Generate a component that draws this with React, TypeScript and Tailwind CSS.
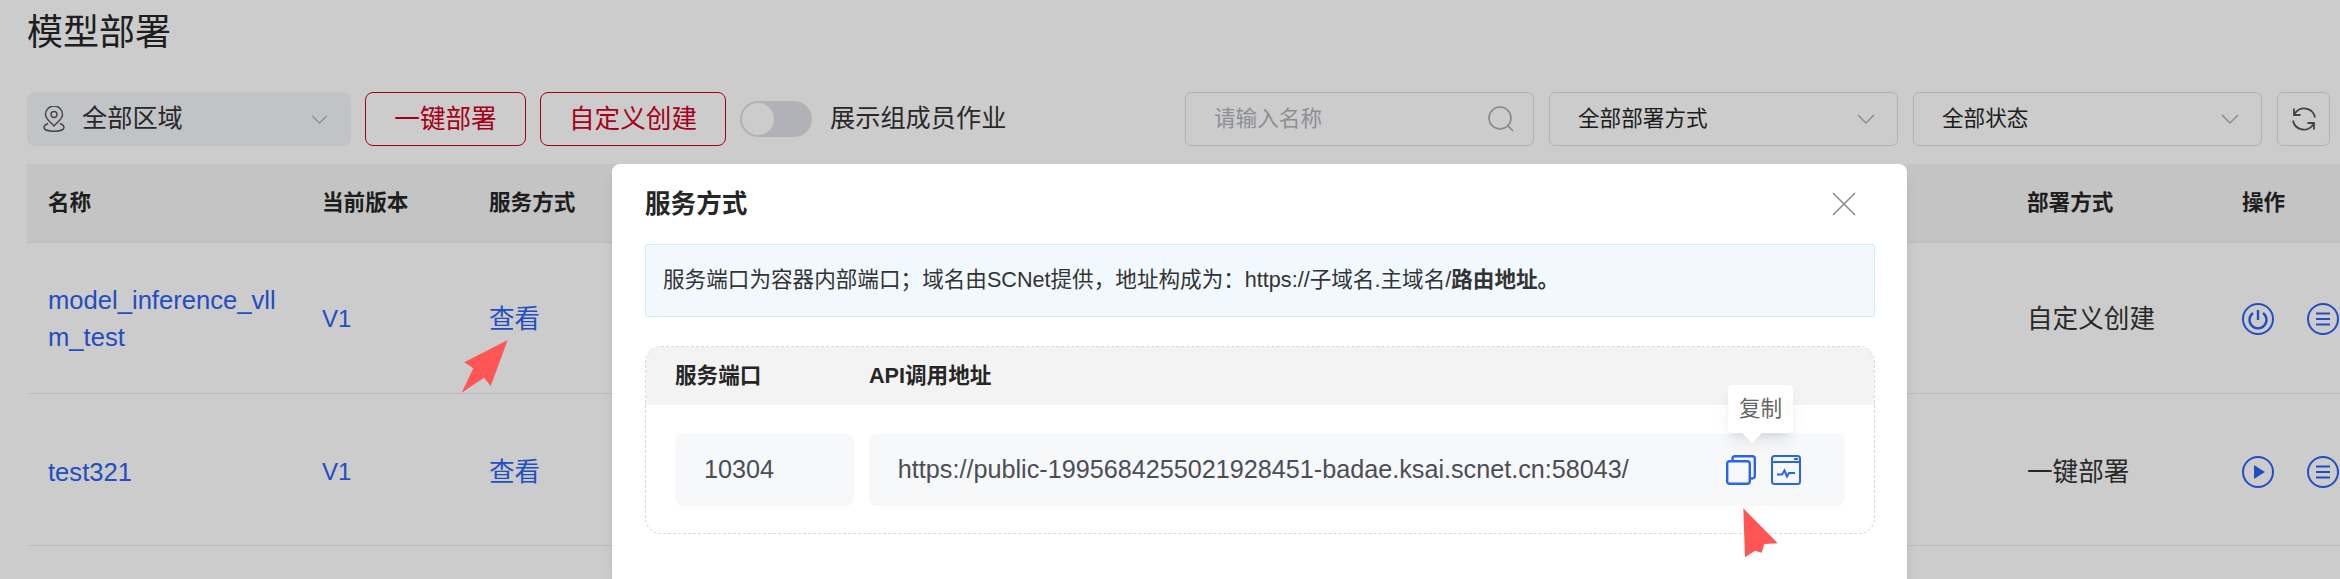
import React from "react";

const Chevron = ({ className }: { className: string }) => (
  <svg className={className} viewBox="0 0 18 10" fill="none" stroke="currentColor" strokeWidth="1.4">
    <path d="M1 1l8 8 8-8" />
  </svg>
);

const CircleIcon = ({ children }: { children: React.ReactNode }) => (
  <svg className="w-8 h-8 text-[#2c62f2]" viewBox="0 0 32 32" fill="none" stroke="currentColor" strokeWidth="2">
    <circle cx="16" cy="16" r="15" />
    {children}
  </svg>
);

const Menu = () => (
  <CircleIcon>
    <path d="M9 10.500h14M9 16h14M9 21.500h14" strokeWidth="2.200" />
  </CircleIcon>
);

const Power = () => (
  <CircleIcon>
    <path d="M11 10a8.500 8.500 0 1 0 10 0M16 7v10" strokeWidth="2.400" />
  </CircleIcon>
);

const Play = () => (
  <CircleIcon>
    <path d="M12 9l11 7-11 7z" fill="currentColor" stroke="none" />
  </CircleIcon>
);

const Row = ({ name, action, mode, offset }: { name: string; action: React.ReactNode; mode: string; offset: string }) => (
  <div className={`grid grid-cols-[274px_167px_1538px_215px_119px] items-center border-b border-[#ebebeb] ${offset}`}>
    <div className="pl-[21px] w-[256px] break-all leading-[37px] text-[#2c62f2]">{name}</div>
    <div className="pl-[21px] text-[24px] text-[#2c62f2]">V1</div>
    <div className="pl-[21px] text-[#2c62f2]">查看</div>
    <div className="pl-[21px] text-[#333]">{mode}</div>
    <div className="pl-[21px] flex gap-[33px]">
      {action}
      <Menu />
    </div>
  </div>
);

const SelectBox = ({ label }: { label: string }) => (
  <div className="w-[349px] h-[54px] flex items-center justify-between rounded-md border border-[#dcdfe6] pl-[28px] pr-[22px] text-[21.600px] text-[#262626]">
    <span>{label}</span>
    <Chevron className="w-[18px] h-[10px] text-[#a8abb2]" />
  </div>
);

export default function App() {
  return (
    <div className="relative w-[2340px] h-[579px] overflow-hidden bg-white font-['Liberation_Sans','Noto_Sans_CJK_SC',sans-serif] text-[#262626]">
      <div className="pl-[27px] pt-[13px]">
        <h1 className="text-[36px] leading-[40px] h-[79px] font-normal">模型部署</h1>
        <div className="flex items-center h-[54px] pr-[10px]">
          <div className="w-[324px] h-[54px] flex items-center justify-between rounded-lg bg-[#f2f4f9] pl-[16px] pr-[23px] text-[25.200px] text-[#333]">
            <span className="flex items-center gap-[17px]">
              <svg className="w-[22px] h-[26px] text-[#555]" viewBox="0 0 22 26" fill="none" stroke="currentColor" strokeWidth="1.400">
                <path d="M11 20C7.500 16 2.500 13 2.500 8.500a8.500 8.500 0 0 1 17 0C19.500 13 14.500 16 11 20z" />
                <circle cx="11" cy="8.500" r="3" />
                <path d="M5 17.500C2.500 18.500 1 19.800 1 21.500 1 23.800 5.500 25.300 11 25.300S21 23.800 21 21.500c0-1.700-1.500-3-4-4" />
              </svg>
              全部区域
            </span>
            <Chevron className="w-[17px] h-[9px] text-[#a8abb2]" />
          </div>
          <button className="ml-[14px] w-[161px] h-[54px] rounded-lg border border-[#ce001f] text-[25.600px] text-[#ce001f]">一键部署</button>
          <button className="ml-[14px] w-[186px] h-[54px] rounded-lg border border-[#ce001f] text-[25.600px] text-[#ce001f]">自定义创建</button>
          <div className="ml-[14px] w-[72px] h-[36px] rounded-full bg-[#dcdfe6] p-[2px]">
            <div className="w-[32px] h-[32px] rounded-full bg-white" />
          </div>
          <span className="ml-[18px] text-[25.200px] text-[#333]">展示组成员作业</span>
          <div className="ml-auto flex gap-[15px]">
            <div className="w-[349px] h-[54px] flex items-center justify-between rounded-md border border-[#dcdfe6] pl-[28px] pr-[18px] text-[21.600px] text-[#b0b3ba]">
              <span>请输入名称</span>
              <svg className="w-[28px] h-[28px] text-[#a8abb2]" viewBox="0 0 28 28" fill="none" stroke="currentColor" strokeWidth="1.600">
                <circle cx="13" cy="13" r="11" />
                <path d="M21 21l5 5" />
              </svg>
            </div>
            <SelectBox label="全部部署方式" />
            <SelectBox label="全部状态" />
            <div className="w-[53px] h-[54px] flex items-center justify-center rounded-md border border-[#dcdfe6]">
              <svg className="w-[26px] h-[26px] text-[#555]" viewBox="0 0 26 26" fill="none" stroke="currentColor" strokeWidth="1.800">
                <path d="M24 11.500A11 11 0 0 0 5 6L3 9M3 2.500V9h6.500M2 14.500A11 11 0 0 0 21 20L23 17M23 23.500V17h-6.500" />
              </svg>
            </div>
          </div>
        </div>
        <div className="mt-[18px] text-[25.600px]">
          <div className="grid grid-cols-[274px_167px_1538px_215px_119px] items-center h-[79px] bg-[#f5f5f5] border-b border-[#ebebeb] text-[21.600px] font-bold text-[#262626]">
            <div className="pl-[21px]">名称</div>
            <div className="pl-[21px]">当前版本</div>
            <div className="pl-[21px]">服务方式</div>
            <div className="pl-[21px]">部署方式</div>
            <div className="pl-[21px]">操作</div>
          </div>
          <div className="h-[151px] grid">
            <Row name="model_inference_vllm_test" action={<Power />} mode="自定义创建" offset="pt-[2px]" />
          </div>
          <div className="h-[152px] grid">
            <Row name="test321" action={<Play />} mode="一键部署" offset="pt-[5px]" />
          </div>
        </div>
      </div>

      <div className="absolute inset-0 bg-black/20" />

      <div className="absolute left-[612px] top-[164px] w-[1295px] h-[415px] rounded-t-lg bg-white shadow-lg pl-[33px] pr-[32px] text-[#333]">
        <div className="flex items-center justify-between h-[80px] pr-[19px]">
          <span className="text-[25.600px] font-bold text-[#262626]">服务方式</span>
          <svg className="w-[24px] h-[24px] text-[#8a8d93]" viewBox="0 0 24 24" fill="none" stroke="currentColor" strokeWidth="1.600">
            <path d="M1 1l22 22M23 1L1 23" />
          </svg>
        </div>
        <div className="h-[73px] flex items-center rounded-[3px] border border-[#d3ecfc] bg-[#f1f8fe] pl-[17px] text-[21.600px]">
          <span>{"服务端口为容器内部端口\uFF1B域名由SCNet提供\uFF0C地址构成为\uFF1Ahttps://子域名.主域名/"}<b>路由地址。</b></span>
        </div>
        <div className="mt-[29px] h-[188px] rounded-2xl border border-dashed border-[#d9d9d9] overflow-hidden text-[25.200px] text-[#4a4e57]">
          <div className="h-[58px] bg-[#f3f3f3] flex items-center pl-[29px] font-bold text-[21.600px] text-[#262626]">
            <span className="w-[194px]">服务端口</span>
            <span>API调用地址</span>
          </div>
          <div className="flex gap-[15px] mt-[29px] px-[29px]">
            <div className="w-[179px] h-[72px] flex items-center pl-[29px] rounded-lg bg-[#f7f8fa]">10304</div>
            <div className="w-[977px] h-[72px] flex items-center justify-between pl-[29px] pr-[44px] rounded-lg bg-[#f7f8fa]">
              <span>https://public-1995684255021928451-badae.ksai.scnet.cn:58043/</span>
              <span className="flex gap-[15px]">
                <svg className="w-[30px] h-[30px] text-[#2a63f2]" viewBox="0 0 30 30" fill="none" stroke="currentColor" strokeWidth="2.400">
                  <rect x="1.200" y="6.200" width="22.600" height="22.600" rx="2.500" />
                  <path d="M6.500 5.500V3.700A2.500 2.500 0 0 1 9 1.200H26.300A2.500 2.500 0 0 1 28.800 3.700V21A2.500 2.500 0 0 1 26.300 23.500H24.500" />
                </svg>
                <svg className="w-[30px] h-[30px] text-[#2a63f2]" viewBox="0 0 30 30" fill="none" stroke="currentColor" strokeWidth="2">
                  <rect x="1" y="1" width="28" height="28" rx="2.500" />
                  <path d="M1 7h28" />
                  <path d="M23 4h4" />
                  <path d="M6 19.500h5l2.500-4 2.500 6 2-3.500h6" />
                </svg>
              </span>
            </div>
          </div>
        </div>
      </div>

      <div className="absolute left-[1728px] top-[385px] w-[65px] h-[48px] rounded bg-white shadow-lg flex items-center justify-center text-[21.600px] text-[#666]">
        复制
        <span className="absolute left-[14px] top-[48px] w-0 h-0 border-x-[10px] border-x-transparent border-t-[10px] border-t-white" />
      </div>

      <svg className="absolute left-[460px] top-[338px] w-[50px] h-[57px]" viewBox="460 338 50 57">
        <path d="M507.700 340L490.700 386 484 377.700 461.700 392.700 473.300 368.300 464.300 362.300z" fill="#ff5555" />
      </svg>
      <svg className="absolute left-[1740px] top-[505px] w-[42px] h-[55px]" viewBox="1740 505 42 55">
        <path d="M1743.300 508.300L1777.700 543.300 1764.300 544 1761.700 552.700 1755 550.700 1745 557.300z" fill="#ff5555" />
      </svg>
    </div>
  );
}
